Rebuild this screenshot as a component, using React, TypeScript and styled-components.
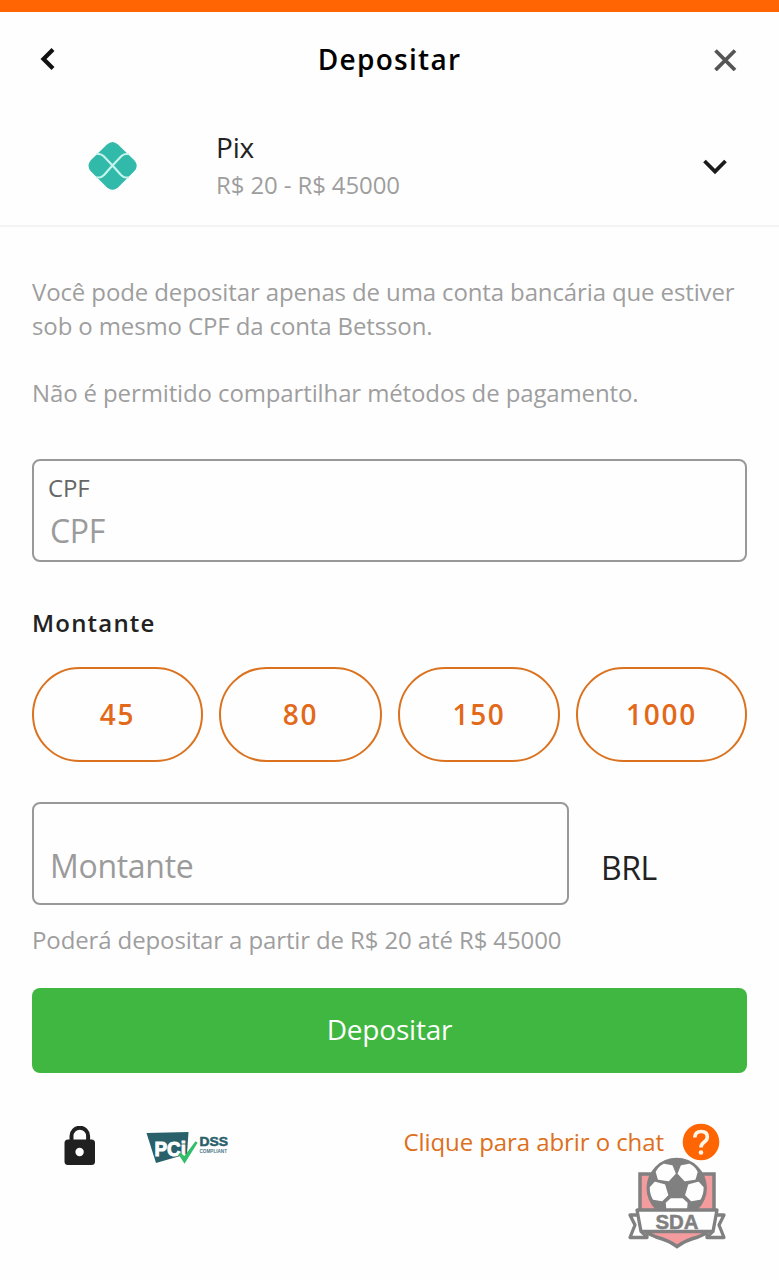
import React from "react";
import styled, { createGlobalStyle } from "styled-components";

const GlobalStyle = createGlobalStyle`
  * { box-sizing: border-box; }
  body { margin: 0; background: #fefefe; }
`;

const Page = styled.div`
  width: 100%;
  min-height: 1280px;
  display: flex;
  flex-direction: column;
  background: #fefefe;
  color: #222;
  font-family: "Open Sans", "Noto Sans", sans-serif;
  border-top: 12px solid #ff6603;
`;

const Header = styled.header`
  display: grid;
  grid-template-columns: 60px 1fr 60px;
  align-items: center;
  height: 94px;
  padding: 0 24px 0 18px;
`;

const Title = styled.h1`
  margin: 0 0 0 6px;
  text-align: center;
  color: #000;
  font-size: 28px;
  line-height: 38px;
  font-weight: 600;
  letter-spacing: 1.3px;
`;

const IconButton = styled.button`
  border: 0;
  padding: 0;
  background: none;
  height: 60px;
  display: flex;
  align-items: center;
  justify-content: center;
`;

const Method = styled.section`
  display: flex;
  align-items: center;
  height: 121px;
  padding: 0 48px 0 88px;
  border-bottom: 2px solid #f3f3f3;
`;

const MethodText = styled.div`
  flex: 1;
  margin: 0 0 0 78px;
`;

const MethodName = styled.div`
  font-size: 28px;
  line-height: 37px;
  letter-spacing: -0.2px;
`;

const MethodRange = styled.div`
  font-size: 24px;
  line-height: 37px;
  color: #9e9e9e;
  letter-spacing: -0.12px;
`;

const Form = styled.main`
  padding: 48px 32px 0;
  display: flex;
  flex-direction: column;
`;

const Note = styled.p<{ $last?: boolean }>`
  margin: 0 0 ${(p) => (p.$last ? 50 : 33.6)}px;
  font-size: 24px;
  line-height: 33.6px;
  color: #9e9e9e;
  letter-spacing: -0.125px;
  white-space: nowrap;
`;

const Field = styled.label<{ $bottom: number }>`
  display: flex;
  flex-direction: column;
  justify-content: flex-end;
  height: 103px;
  padding: 0 16px ${(p) => p.$bottom}px;
  border: 2px solid #999;
  border-radius: 8px;
`;

const FieldLabel = styled.span`
  margin-left: -2px;
  font-size: 24px;
  line-height: 32px;
  letter-spacing: -0.2px;
  color: #666;
`;

const Placeholder = styled.span`
  font-size: 32px;
  line-height: 44px;
  margin-top: 5px;
  letter-spacing: -0.3px;
  color: #9b9b9b;
`;

const SectionTitle = styled.h2`
  margin: 44px 0 28px;
  font-size: 24px;
  line-height: 33px;
  font-weight: 600;
  letter-spacing: 1.2px;
`;

const Pills = styled.div`
  display: flex;
  gap: 16px;
  margin-bottom: 40px;
`;

const Pill = styled.button<{ $w: number }>`
  flex: 0 0 ${(p) => p.$w}px;
  height: 95px;
  padding: 0 0 2px;
  border: 2px solid #da721f;
  border-radius: 48px;
  background: none;
  color: #e3691a;
  font: 600 28px/38px "Open Sans", "Noto Sans", sans-serif;
  letter-spacing: 1.7px;
`;

const AmountRow = styled.div`
  display: grid;
  grid-template-columns: 537px 1fr;
  column-gap: 32px;
`;

const Currency = styled.span`
  align-self: end;
  font-size: 32px;
  line-height: 44px;
  margin-bottom: 15px;
  letter-spacing: -0.5px;
`;

const Hint = styled.p`
  margin: 18px 0 31px;
  font-size: 24px;
  line-height: 34px;
  color: #9e9e9e;
  letter-spacing: -0.12px;
  white-space: nowrap;
`;

const Submit = styled.button`
  height: 85px;
  padding: 0 0 3px;
  border: 0;
  border-radius: 8px;
  background: #40b740;
  color: #fff;
  font: 400 28px/38px "Open Sans", "Noto Sans", sans-serif;
  letter-spacing: -0.2px;
`;

const Footer = styled.footer`
  display: flex;
  align-items: center;
  height: 80px;
  margin-top: 33px;
  padding: 0 59px 0 64px;
`;

const PciSlot = styled.div`
  display: flex;
  margin: 3px 0 0 50px;
`;

const ChatLink = styled.a`
  display: flex;
  align-items: center;
  gap: 18px;
  margin: -8px 0 0 auto;
  color: #dc701c;
  font-size: 24px;
  line-height: 34px;
  letter-spacing: -0.08px;
  white-space: nowrap;
`;

const Crest = styled.div`
  position: absolute;
  left: 626px;
  top: 1154px;
`;

const PixLogo = () => (
  <svg width="50" height="50" viewBox="0 0 50 50" style={{ display: "block" }}>
    <path d="M19 3.5Q24.500-1.500 30 3.500L46 19Q51.500 24.700 46 30.500L30 46.500Q24.500 51 19 46.500L3 30.500Q-2 24.700 3 19Z" fill="#31b9aa" />
    <path d="M8 13H11Q13.500 13 16 15.500L24.500 24.500L33 15.500Q35.500 13 38 13H41M8 36.500H11Q13.500 36.500 16 34L24.500 24.500L33 34Q35.500 36.500 38 36.500H41" fill="none" stroke="#c6f4ed" strokeWidth="2.2" />
  </svg>
);

const LockIcon = () => (
  <svg width="32" height="40" viewBox="0 0 32 40">
    <path d="M7.500 16V10a8.300 8.300 0 0 1 16.600 0v6" fill="none" stroke="#202020" strokeWidth="4" />
    <rect x="0.500" y="13.500" width="30.500" height="25.500" rx="3.500" fill="#202020" />
    <circle cx="15.600" cy="26" r="4.200" fill="#fefefe" />
  </svg>
);

const PciLogo = () => (
  <svg width="84" height="38" viewBox="0 0 84 38">
    <path d="M0.500 4L42.500 3L41 25L10 34Z" fill="#29606a" />
    <text
      x="8.500"
      y="27"
      fontSize="20"
      fontWeight="700"
      fontFamily="Liberation Sans, sans-serif"
      fill="#fefefe"
      stroke="#fefefe"
      strokeWidth="1"
      textLength="31.500"
      lengthAdjust="spacingAndGlyphs"
    >
      PCi
    </text>
    <path d="M33.500 24.500L38.500 29L50.500 13L38.500 32.500Z" fill="#31bd69" stroke="#31bd69" strokeWidth="2.500" />
    <g fontFamily="Liberation Sans, sans-serif" fontWeight="700">
      <text x="53.500" y="17" fontSize="12" fill="#29606a" stroke="#29606a" strokeWidth="0.500" textLength="28.500" lengthAdjust="spacingAndGlyphs">DSS</text>
      <text x="53.500" y="24" fontSize="4.500" fill="#4c7784" textLength="27.500" lengthAdjust="spacingAndGlyphs">COMPLIANT</text>
    </g>
  </svg>
);

const HelpIcon = () => (
  <svg width="38" height="38" viewBox="0 0 38 38">
    <circle cx="19" cy="19" r="18.300" fill="#ff6603" />
    <path d="M12.800 14.500Q13 8.500 19.200 8.500Q25.300 8.500 25.300 14Q25.300 17 22 19.200Q19 21.200 19 24.500" fill="none" stroke="#fff6e8" strokeWidth="3.600" />
    <circle cx="19" cy="29.500" r="2.300" fill="#fff6e8" />
  </svg>
);

const CrestLogo = () => (
  <svg width="102" height="98" viewBox="0 0 102 98">
    <path d="M14 20H88V72Q82 79 72 83Q60 86 51 92.500Q42 86 30 83Q20 79 14 72Z" fill="#f49b9e" stroke="#808080" strokeWidth="3.500" />
    <circle cx="50.700" cy="34" r="30.200" fill="#808080" />
    <g fill="#fefefe" stroke="#fefefe" strokeWidth="1.500" strokeLinejoin="round">
      <path d="M30.500 18Q33 13 38 10.500L46 12L49 19.500L42.500 26.500L32.500 25Z" />
      <path d="M70.900 18Q68.400 13 63.400 10.500L55.400 12L52.400 19.500L58.900 26.500L68.900 25Z" />
      <path d="M24.500 33.500L29 28.500L38.500 31L41.500 41L36 46.500L27.500 45Q24.500 40 24.500 33.500Z" />
      <path d="M76.900 33.500L72.400 28.500L62.900 31L59.900 41L65.400 46.500L73.900 45Q76.900 40 76.900 33.500Z" />
      <path d="M40.500 49L45 45H56.400L60.900 49L60 58H41.400Z" />
    </g>
    <path d="M14 61H4L9 71L4 83.500H21V77M88 61H98L93 71L98 83.500H81V77" fill="#fefefe" stroke="#808080" strokeWidth="3.300" strokeLinejoin="round" />
    <path d="M11 56H91L87 77.500H15Z" fill="#fefefe" stroke="#808080" strokeWidth="3.300" strokeLinejoin="round" />
    <path d="M15 77.500L21 83.500M87 77.500L81 83.500" stroke="#808080" strokeWidth="3" />
    <text x="29.500" y="75" fontSize="19.500" fontWeight="700" fontFamily="Liberation Sans, sans-serif" fill="#808080" stroke="#808080" strokeWidth="0.500" textLength="43" lengthAdjust="spacingAndGlyphs">SDA</text>
  </svg>
);

const amounts = [
  { value: 45, width: 171 },
  { value: 80, width: 163 },
  { value: 150, width: 162 },
  { value: 1000, width: 171 },
];

export default function App() {
  return (
    <>
      <GlobalStyle />
      <Page>
        <Header>
          <IconButton aria-label="Voltar">
            <svg width="16" height="24" viewBox="0 0 16 24">
              <path d="M13 2.500L3.500 12L13 21.500" fill="none" stroke="#111" strokeWidth="4.200" />
            </svg>
          </IconButton>
          <Title>Depositar</Title>
          <IconButton aria-label="Fechar">
            <svg width="24" height="24" viewBox="0 0 24 24">
              <path d="M2.500 3.500L22 23M22 3.500L2.500 23" stroke="#555" strokeWidth="3.800" />
            </svg>
          </IconButton>
        </Header>
        <Method>
          <PixLogo />
          <MethodText>
            <MethodName>Pix</MethodName>
            <MethodRange>R$ 20 - R$ 45000</MethodRange>
          </MethodText>
          <svg width="32" height="20" viewBox="0 0 32 20">
            <path d="M5.500 5L16 15.500L26.500 5" fill="none" stroke="#1b1b1b" strokeWidth="3.800" />
          </svg>
        </Method>
        <Form>
          <Note>
            Você pode depositar apenas de uma conta bancária que estiver
            <br />
            sob o mesmo CPF da conta Betsson.
          </Note>
          <Note $last>Não é permitido compartilhar métodos de pagamento.</Note>
          <Field $bottom={7}>
            <FieldLabel>CPF</FieldLabel>
            <Placeholder>CPF</Placeholder>
          </Field>
          <SectionTitle>Montante</SectionTitle>
          <Pills>
            {amounts.map((a) => (
              <Pill key={a.value} $w={a.width}>
                {a.value}
              </Pill>
            ))}
          </Pills>
          <AmountRow>
            <Field $bottom={15}>
              <Placeholder>Montante</Placeholder>
            </Field>
            <Currency>BRL</Currency>
          </AmountRow>
          <Hint>Poderá depositar a partir de R$ 20 até R$ 45000</Hint>
          <Submit>Depositar</Submit>
        </Form>
        <Footer>
          <LockIcon />
          <PciSlot>
            <PciLogo />
          </PciSlot>
          <ChatLink>
            Clique para abrir o chat
            <HelpIcon />
          </ChatLink>
        </Footer>
        <Crest>
          <CrestLogo />
        </Crest>
      </Page>
    </>
  );
}
